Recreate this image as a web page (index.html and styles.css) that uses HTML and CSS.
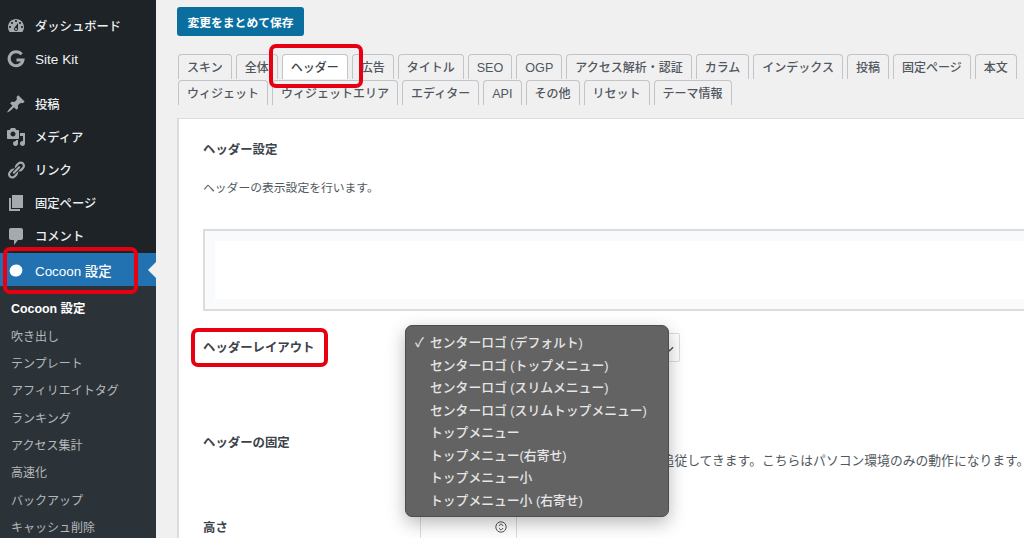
FILE: index.html
```html
<!DOCTYPE html>
<html lang="ja">
<head>
<meta charset="utf-8">
<title>Cocoon 設定</title>
<link rel="stylesheet" href="styles.css">
</head>
<body>
<div class="app">
  <nav class="sidebar">
    <ul class="menu">
      <li class="item"><svg class="ico" viewBox="0 0 20 20"><path d="M3.76 16h12.48c1.1-1.37 1.76-3.11 1.76-5 0-4.42-3.58-8-8-8s-8 3.58-8 8c0 1.89.66 3.63 1.76 5zM10 4c.55 0 1 .45 1 1s-.45 1-1 1-1-.45-1-1 .45-1 1-1zM6 6c.55 0 1 .45 1 1s-.45 1-1 1-1-.45-1-1 .45-1 1-1zm8 0c.55 0 1 .45 1 1s-.45 1-1 1-1-.45-1-1 .45-1 1-1zm-5.37 5.55L12 7v6c0 1.1-.9 2-2 2s-2-.9-2-2c0-.57.24-1.08.63-1.45zM4 10c.55 0 1 .45 1 1s-.45 1-1 1-1-.45-1-1 .45-1 1-1zm12 0c.55 0 1 .45 1 1s-.45 1-1 1-1-.45-1-1 .45-1 1-1zm-5 3c0-.55-.45-1-1-1s-1 .45-1 1 .45 1 1 1 1-.45 1-1z"/></svg>ダッシュボード</li>
      <li class="item item-kit"><svg class="ico" viewBox="0 0 20 20"><path class="ico-g" d="M15.6 5.4A7 7 0 1 0 17 11H10.5"/></svg>Site Kit</li>
      <li class="item"><svg class="ico" viewBox="0 0 20 20"><path d="M10.44 3.02l1.82-1.82 6.36 6.35-1.83 1.82c-1.05-.68-2.48-.57-3.41.36l-.75.75c-.92.93-1.04 2.35-.35 3.41l-1.83 1.82-2.41-2.41-2.8 2.79c-.42.42-3.38 2.71-3.8 2.29s1.86-3.39 2.28-3.81l2.79-2.79L4.1 9.36l1.83-1.82c1.05.69 2.48.57 3.4-.36l.75-.75c.93-.92 1.05-2.35.36-3.41z"/></svg>投稿</li>
      <li class="item"><svg class="ico" viewBox="0 0 20 20"><path d="M13 11V4c0-.55-.45-1-1-1h-1.67L9 1H5L3.67 3H2c-.55 0-1 .45-1 1v7c0 .55.45 1 1 1h10c.55 0 1-.45 1-1zM7 4.5c1.38 0 2.5 1.12 2.5 2.5S8.38 9.5 7 9.5 4.5 8.38 4.5 7 5.62 4.5 7 4.5zM14 6h5v10.5c0 1.38-1.12 2.5-2.5 2.5S14 17.88 14 16.5s1.12-2.5 2.5-2.5c.17 0 .34.02.5.05V9h-3V6zm-4 8.05V13h2v3.5c0 1.38-1.12 2.5-2.5 2.5S7 17.88 7 16.5 8.12 14 9.5 14c.17 0 .34.02.5.05z"/></svg>メディア</li>
      <li class="item"><svg class="ico" viewBox="0 0 20 20"><path d="M17.74 2.76c1.68 1.69 1.68 4.41 0 6.1l-1.53 1.52c-1.12 1.12-2.7 1.47-4.14 1.09l2.62-2.61.76-.77.76-.76c.84-.84.84-2.2 0-3.04-.84-.85-2.2-.85-3.04 0l-.77.76-3.38 3.38c-.37-1.44-.02-3.02 1.1-4.14l1.52-1.53c1.69-1.68 4.42-1.68 6.1 0zM8.59 13.43l5.34-5.34c.42-.42.42-1.1 0-1.52-.44-.43-1.13-.39-1.53 0l-5.33 5.34c-.42.42-.42 1.1 0 1.52.44.43 1.13.39 1.52 0zm-.76 2.29l4.14-4.15c.38 1.44.03 3.02-1.09 4.14l-1.52 1.53c-1.69 1.68-4.41 1.68-6.1 0-1.68-1.68-1.68-4.42 0-6.1l1.53-1.52c1.12-1.12 2.7-1.47 4.14-1.1l-4.14 4.15c-.85.84-.85 2.2 0 3.05.84.84 2.2.84 3.04 0z"/></svg>リンク</li>
      <li class="item"><svg class="ico" viewBox="0 0 20 20"><path d="M6 15V2h11v13H6zm-1 1h9v2H3V5h2v11z"/></svg>固定ページ</li>
      <li class="item"><svg class="ico" viewBox="0 0 20 20"><path d="M5 2h10c1.1 0 2 .9 2 2v8c0 1.1-.9 2-2 2h-3l-4 5v-5H5c-1.1 0-2-.9-2-2V4c0-1.1.9-2 2-2z"/></svg>コメント</li>
      <li class="item item-current"><svg class="ico ico-white" viewBox="0 0 20 20"><ellipse cx="10" cy="10.5" rx="6.5" ry="6" transform="rotate(-25 10 10.5)"/></svg>Cocoon 設定<span class="notch"></span></li>
    </ul>
    <ul class="submenu">
      <li class="sub sub-current">Cocoon 設定</li>
      <li class="sub">吹き出し</li>
      <li class="sub">テンプレート</li>
      <li class="sub">アフィリエイトタグ</li>
      <li class="sub">ランキング</li>
      <li class="sub">アクセス集計</li>
      <li class="sub">高速化</li>
      <li class="sub">バックアップ</li>
      <li class="sub">キャッシュ削除</li>
    </ul>
  </nav>
  <main class="main">
    <button class="save" type="button">変更をまとめて保存</button>
    <div class="tabs">
      <div class="tab-row">
        <span class="tab">スキン</span>
        <span class="tab">全体</span>
        <span class="tab tab-active">ヘッダー</span>
        <span class="tab">広告</span>
        <span class="tab">タイトル</span>
        <span class="tab tab-latin">SEO</span>
        <span class="tab tab-latin">OGP</span>
        <span class="tab">アクセス解析・認証</span>
        <span class="tab">カラム</span>
        <span class="tab">インデックス</span>
        <span class="tab">投稿</span>
        <span class="tab">固定ページ</span>
        <span class="tab">本文</span>
      </div>
      <div class="tab-row">
        <span class="tab">ウィジェット</span>
        <span class="tab">ウィジェットエリア</span>
        <span class="tab">エディター</span>
        <span class="tab tab-latin">API</span>
        <span class="tab">その他</span>
        <span class="tab">リセット</span>
        <span class="tab">テーマ情報</span>
      </div>
    </div>
    <section class="panel">
      <h2 class="title">ヘッダー設定</h2>
      <p class="desc">ヘッダーの表示設定を行います。</p>
      <div class="preview"><div class="preview-inner"></div></div>
      <div class="row row-layout">
        <div class="label">ヘッダーレイアウト</div>
        <div class="select"><svg class="chev" viewBox="0 0 10 6"><path d="M1 1l4 4 4-4"/></svg></div>
      </div>
      <div class="row row-fixed">
        <div class="label">ヘッダーの固定</div>
        <div class="note">ヘッダーを固定すると、スクロールしても追従してきます。こちらはパソコン環境のみの動作になります。</div>
      </div>
      <div class="row row-height">
        <div class="label">高さ</div>
        <div class="number"><svg class="spin" viewBox="0 0 12 12"><circle cx="6" cy="6" r="5.2"/><path d="M3.8 5L6 2.8 8.2 5M3.8 7L6 9.2 8.2 7"/></svg></div>
      </div>
    </section>
  </main>
</div>
<ul class="dropdown">
  <li class="opt"><span class="check">✓</span>センターロゴ (デフォルト)</li>
  <li class="opt">センターロゴ (トップメニュー)</li>
  <li class="opt">センターロゴ (スリムメニュー)</li>
  <li class="opt">センターロゴ (スリムトップメニュー)</li>
  <li class="opt">トップメニュー</li>
  <li class="opt">トップメニュー(右寄せ)</li>
  <li class="opt">トップメニュー小</li>
  <li class="opt">トップメニュー小 (右寄せ)</li>
</ul>
<div class="mark mark-tab"></div>
<div class="mark mark-side"></div>
<div class="mark mark-label"></div>
</body>
</html>
```
FILE: styles.css
```css
* { box-sizing: border-box; }
html, body { margin: 0; padding: 0; height: 538px; overflow: hidden; }
body {
  position: relative;
  background: #f0f0f1;
  font-family: "Liberation Sans", "Noto Sans CJK JP", sans-serif;
  font-size: 12px;
  color: #3c434a;
}
ul { list-style: none; margin: 0; padding: 0; }
.app { display: flex; height: 538px; overflow: hidden; }

.sidebar { width: 156px; flex: none; background: #1d2327; padding-top: 9.5px; }
.item {
  position: relative;
  display: flex;
  align-items: center;
  height: 33.2px;
  padding-left: 6px;
  color: #eef0f1;
  font-size: 12.3px;
  font-weight: 500;
}
.item-kit { margin-bottom: 11.2px; font-size: 13.6px; }
.ico { width: 20px; height: 20px; margin-right: 9px; fill: #a7aaad; flex: none; }
.ico-g { fill: none; stroke: #a7aaad; stroke-width: 3; }
.ico-white { fill: #fff; }
.item-current { background: #2271b1; color: #fff; font-size: 13.4px; }
.notch {
  position: absolute;
  right: 0;
  top: 50%;
  margin-top: -8px;
  border: 8px solid transparent;
  border-right-color: #f0f0f1;
  border-left-width: 0;
}
.submenu { background: #2c3338; padding-top: 8px; height: 260px; }
.sub {
  display: flex;
  align-items: center;
  height: 27.35px;
  padding-left: 11px;
  color: #b5b8bb;
  font-size: 12px;
}
.sub-current { color: #fff; font-weight: 700; font-size: 12.4px; }

.main { flex: 1; min-width: 0; padding: 7px 0 0 21px; }
.save {
  display: block;
  width: 127px;
  height: 29px;
  padding: 0;
  border: 0;
  border-radius: 3px;
  background: #0a6f9f;
  color: #fff;
  font-family: inherit;
  font-size: 11.8px;
  font-weight: 700;
}
.tabs { margin-top: 18px; padding-left: 1px; }
.tab-row { display: flex; gap: 4px; height: 26px; }
.tab {
  height: 25px;
  padding: 0 8px;
  border: 1px solid #c3c4c7;
  border-bottom: 0;
  border-radius: 4px 4px 0 0;
  background: #f0f0f1;
  color: #50575e;
  font-size: 12px;
  font-weight: 500;
  line-height: 26px;
  white-space: nowrap;
}
.tab-latin { font-size: 12.6px; }
.tab-active { background: #fff; color: #3c434a; }

.panel {
  height: 430px;
  margin-top: 12px;
  padding: 0 0 0 24px;
  border-top: 1px solid #dcdcde;
  border-left: 2px solid #dcdcde;
  background: #fff;
  margin-right: -4px;
}
.title { margin: 22px 0 0; font-size: 12.4px; font-weight: 700; line-height: 18px; color: #3c434a; }
.desc { margin: 20px 0 0; font-size: 11.8px; line-height: 18px; color: #50575e; }
.preview {
  height: 82px;
  margin-top: 32px;
  padding: 10px 0 10px 10px;
  border: 2px solid #dcdcde;
  border-right: 0;
  background: #f9fafb;
}
.preview-inner { height: 100%; background: #fff; }
.row { display: grid; grid-template-columns: 217px 1fr; }
.label { font-size: 12.4px; font-weight: 700; line-height: 18px; color: #3c434a; }
.row-layout { height: 29px; margin-top: 22px; align-items: center; }
.select {
  position: relative;
  width: 260px;
  height: 29px;
  border: 1px solid #dcdcde;
  border-radius: 2px;
  background: #fff;
}
.chev { position: absolute; right: 5px; top: 12px; width: 9px; height: 6px; fill: none; stroke: #50575e; stroke-width: 1.5; }
.row-fixed { margin-top: 72px; }
.note { margin-top: 18px; font-size: 12.8px; line-height: 18px; color: #50575e; white-space: nowrap; }
.row-height { margin-top: 49px; align-items: start; }
.number {
  position: relative;
  width: 97px;
  height: 30px;
  margin-top: -5px;
  border: 1px solid #dcdcde;
}
.spin { position: absolute; right: 9px; top: 6px; width: 12px; height: 12px; fill: none; stroke: #50575e; stroke-width: 1; }

.dropdown {
  position: absolute;
  left: 405px;
  top: 325px;
  width: 264px;
  height: 192px;
  padding-top: 6px;
  border: 1px solid #4d4d4d;
  border-radius: 7px;
  background: #636363;
  box-shadow: 0 6px 18px rgba(0, 0, 0, 0.28);
  color: #e6e6e6;
  font-size: 12.8px;
  font-weight: 500;
}
.opt { position: relative; height: 22.55px; line-height: 22px; padding-left: 24px; white-space: nowrap; }
.check { position: absolute; left: 9px; top: 0; }

.mark { position: absolute; border: 4px solid #e60012; border-radius: 7px; }
.mark-tab { left: 269px; top: 44px; width: 94px; height: 44px; }
.mark-side { left: 3px; top: 247px; width: 135px; height: 47px; }
.mark-label { left: 191px; top: 328px; width: 137px; height: 39px; }
```
